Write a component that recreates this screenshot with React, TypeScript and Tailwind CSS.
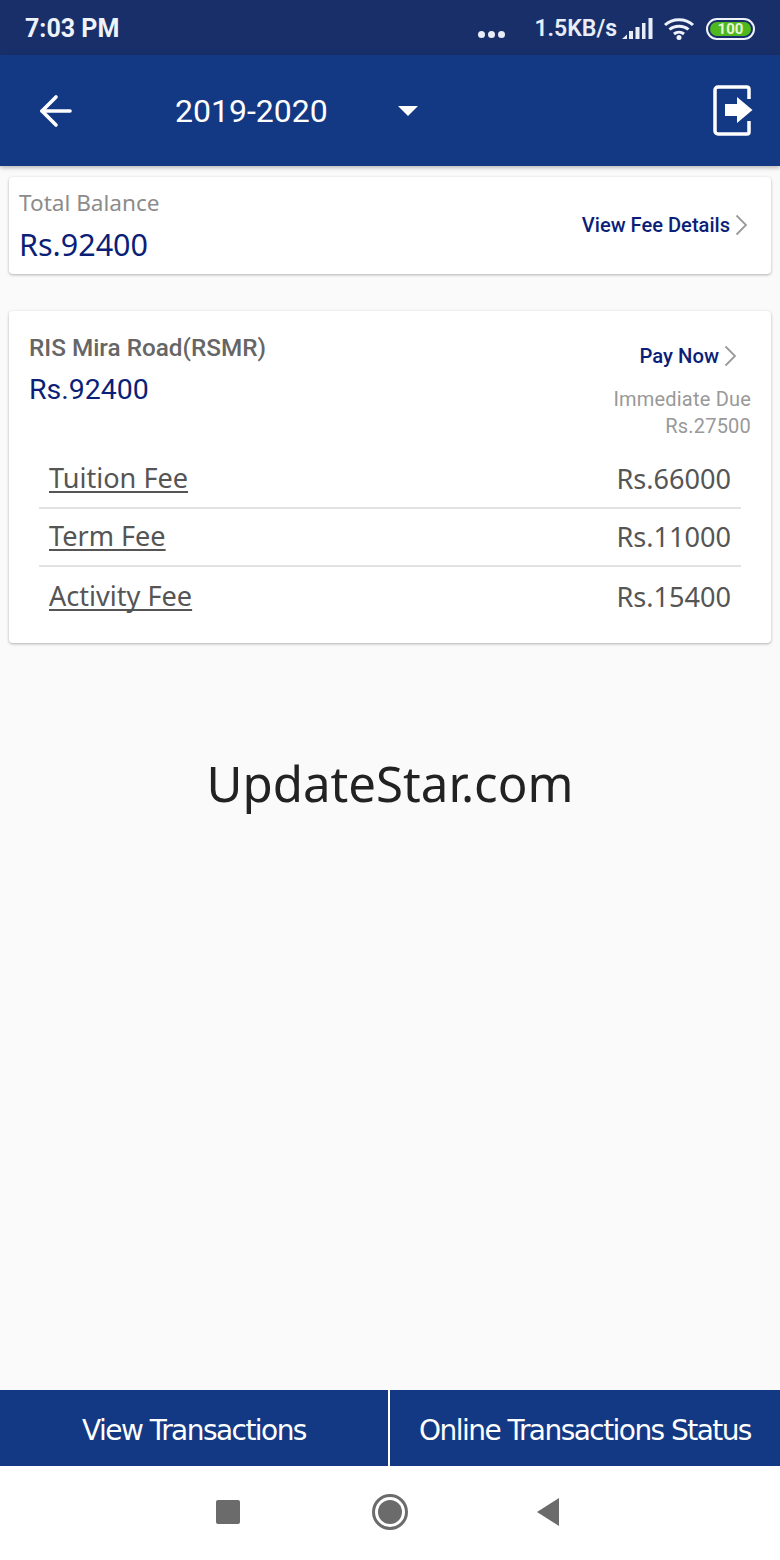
import { ArrowLeft } from 'lucide-react';

function SignalIcon() {
  return (
    <svg width="31" height="22" viewBox="0 0 31 22" fill="#e8edf8">
      <path d="M0 21 L5 16.500 V21 Z" />
      <rect x="7" y="13" width="4" height="8" />
      <rect x="13.500" y="9" width="4" height="12" />
      <rect x="20" y="5" width="3.500" height="16" />
      <rect x="26.500" y="0" width="4" height="21" />
    </svg>
  );
}

function WifiIcon() {
  return (
    <svg width="32" height="26" viewBox="0 0 32 26" fill="none" stroke="#eef2fa" strokeWidth="3">
      <path d="M2 9 C9.500 2 22.500 2 30 9" />
      <path d="M6.500 13.500 C11.500 9 20.500 9 25.500 13.500" />
      <path d="M11 18 C14 15.500 18 15.500 21 18" />
      <circle cx="16" cy="21.500" r="2.500" fill="#eef2fa" stroke="none" />
    </svg>
  );
}

function ExitIcon() {
  return (
    <svg width="40" height="51" viewBox="0 0 40 51" fill="none">
      <path d="M36 14 V4 a2 2 0 0 0 -2 -2 H5 a3 3 0 0 0 -3 3 V46 a3 3 0 0 0 3 3 H34 a2 2 0 0 0 2 -2 V36" stroke="white" strokeWidth="3.500" />
      <path d="M12 19 H24 V12 L39.500 25 L24 38 V31 H12 Z" fill="white" />
    </svg>
  );
}

function Chevron() {
  return (
    <svg width="13" height="22" viewBox="0 0 13 22" fill="none" stroke="#9a9a9a" strokeWidth="1.800">
      <path d="M1.500 1.500 L11 11 L1.500 20.500" />
    </svg>
  );
}

function FeeRow({ name, amount, last }: { name: string; amount: string; last?: boolean }) {
  return (
    <div className={`flex h-[58.500px] items-center justify-between px-[10px] font-['Noto_Sans',sans-serif] text-[#555] ${last ? '' : 'border-b-2 border-[#e2e2e2]'}`}>
      <span className="text-[27.100px] underline decoration-2 underline-offset-[3px] [text-decoration-skip-ink:none]">{name}</span>
      <span className="pt-[2px] text-[27.100px]">{amount}</span>
    </div>
  );
}

function App() {
  return (
    <div className="flex h-[1560px] w-[780px] flex-col overflow-hidden bg-[#fafafa] font-['Roboto',sans-serif]">
      <div className="flex h-[55px] items-center justify-between bg-[#192f69] pt-[3px] pr-[25px] pl-[25px] text-white">
        <span className="text-[25px] font-bold text-[#eef2fa]">7:03 PM</span>
        <div className="flex items-center">
          <div className="mt-[10px] mr-[29px] flex gap-[3px]">
            <span className="h-[7px] w-[7px] rounded-full bg-[#e8edf8]" />
            <span className="h-[7px] w-[7px] rounded-full bg-[#e8edf8]" />
            <span className="h-[7px] w-[7px] rounded-full bg-[#e8edf8]" />
          </div>
          <span className="text-[23px] font-semibold text-[#e8edf8]">1.5KB/s</span>
          <div className="mr-[10px] ml-[5px]"><SignalIcon /></div>
          <div className="mr-[11px]"><WifiIcon /></div>
          <div className="flex h-[22px] w-[49px] items-center justify-center rounded-full border-2 border-[#eef2fa] p-[2px]">
            <div className="flex h-full w-full items-center justify-center rounded-full bg-[#4fb81e] text-[15px] leading-none font-bold text-[#e6f6d8]">100</div>
          </div>
        </div>
      </div>

      <header className="z-10 flex h-[111px] items-center bg-[#143984] pr-[27px] pl-[32px] shadow-[0_2px_4px_rgba(0,0,0,0.25)]">
        <ArrowLeft size={48} color="white" strokeWidth={1.800} />
        <span className="ml-[95px] text-[32px] text-white">2019-2020</span>
        <div className="ml-[70px] h-0 w-0 border-x-[10px] border-t-[10px] border-x-transparent border-t-white" />
        <div className="ml-auto"><ExitIcon /></div>
      </header>

      <main className="flex flex-1 flex-col px-[9px] pt-[11px]">
        <div className="flex h-[97px] items-center justify-between rounded-[4px] bg-white pr-[23px] pl-[10px] shadow-[0_1px_3px_rgba(0,0,0,0.3)]">
          <div>
            <div className="font-['Noto_Sans',sans-serif] text-[22.600px] leading-[36px] text-[#8c8c8c]">Total Balance</div>
            <div className="font-['Noto_Sans',sans-serif] text-[30.500px] leading-[46px] text-[#0c1f78]">Rs.92400</div>
          </div>
          <div className="flex items-center gap-[5px] text-[#0c1f78]">
            <span className="text-[20.100px] font-medium">View Fee Details</span>
            <Chevron />
          </div>
        </div>

        <div className="mt-[37px] h-[332px] rounded-[4px] bg-white pt-[20px] pr-[20px] pl-[20px] shadow-[0_1px_3px_rgba(0,0,0,0.3)]">
          <div className="flex justify-between">
            <div>
              <div className="text-[24.300px] leading-[34px] font-medium text-[#666]">RIS Mira Road(RSMR)</div>
              <div className="mt-[6px] text-[28.500px] leading-[38px] text-[#0c1f78]">Rs.92400</div>
            </div>
            <div className="flex flex-col items-end">
              <div className="mr-[14px] flex items-center gap-[5px] text-[#0c1f78]">
                <span className="text-[20.300px] leading-[50px] font-medium">Pay Now</span>
                <Chevron />
              </div>
              <div className="mt-[5px] text-right text-[20px] leading-[27px] tracking-[0.2px] text-[#999]">
                Immediate Due<br />Rs.27500
              </div>
            </div>
          </div>
          <div className="mx-[10px] mt-[10px]">
            <FeeRow name="Tuition Fee" amount="Rs.66000" />
            <FeeRow name="Term Fee" amount="Rs.11000" />
            <FeeRow name="Activity Fee" amount="Rs.15400" last />
          </div>
        </div>

        <div className="mt-[108px] text-center font-['Noto_Sans',sans-serif] text-[49.200px] leading-[64px] text-[#222]">UpdateStar.com</div>
      </main>

      <div className="flex h-[76px] gap-[2px] bg-white font-['DejaVu_Sans',sans-serif] text-[28px] text-white">
        <button className="flex w-[388px] items-center justify-center bg-[#143984] pt-[5px]">
          <span className="tracking-[-1.550px]">View Transactions</span>
        </button>
        <button className="flex flex-1 items-center justify-center bg-[#143984] pt-[5px]">
          <span className="tracking-[-1.550px]">Online Transactions Status</span>
        </button>
      </div>

      <nav className="flex h-[94px] items-center bg-white pb-[2px] pl-[216px]">
        <div className="h-[24px] w-[24px] rounded-[2px] bg-[#6b6b6b]" />
        <div className="ml-[132px] flex h-[36px] w-[36px] items-center justify-center rounded-full border-[3px] border-[#6b6b6b]">
          <div className="h-[24px] w-[24px] rounded-full bg-[#6b6b6b]" />
        </div>
        <svg className="ml-[128px]" width="26" height="30" viewBox="0 0 26 30" fill="#6b6b6b"><path d="M1 15 L23 1 V29 Z" /></svg>
      </nav>
    </div>
  );
}

export default App;
